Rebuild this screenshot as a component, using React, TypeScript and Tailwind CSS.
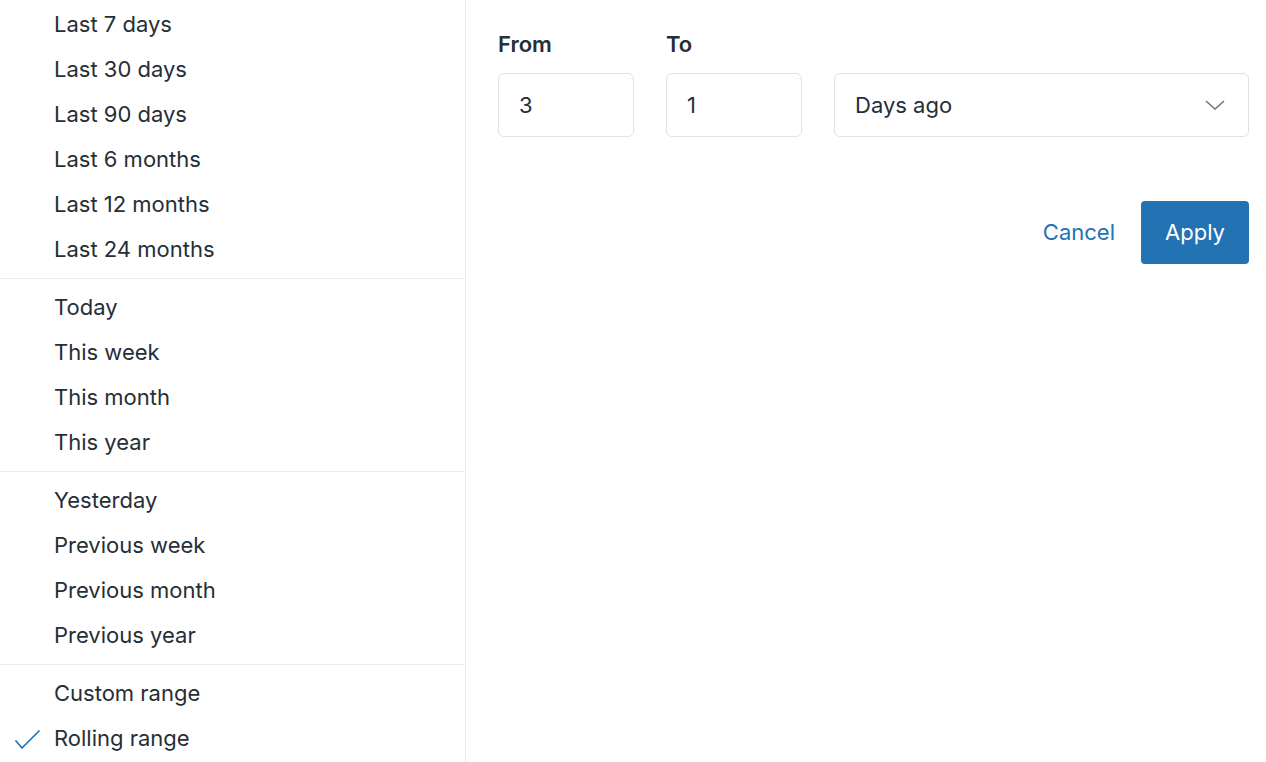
import React from "react";

const groups: string[][] = [
  ["Last 7 days", "Last 30 days", "Last 90 days", "Last 6 months", "Last 12 months", "Last 24 months"],
  ["Today", "This week", "This month", "This year"],
  ["Yesterday", "Previous week", "Previous month", "Previous year"],
  ["Custom range", "Rolling range"],
];

function Check() {
  return (
    <svg width="28" height="22" viewBox="0 0 28 22" className="absolute left-[13px] top-[11px]">
      <polyline points="3,14 9,21 26,4" fill="none" stroke="#2272b4" strokeWidth="1.7" strokeLinecap="round" strokeLinejoin="round" />
    </svg>
  );
}

export default function App() {
  return (
    <div
      className="flex h-[762px] w-full bg-white text-[#262e36] overflow-hidden"
      style={{ fontFamily: "Inter, 'Noto Sans', sans-serif" }}
    >
      <div className="w-[466px] shrink-0 border-r border-[#ececec] flex flex-col">
        {groups.map((g, gi) => (
          <div
            key={gi}
            className={
              gi === 0
                ? "pt-[2px] pb-[6px]"
                : "pt-[6px] pb-[6px] border-t border-[#ececec]"
            }
          >
            {g.map((item) => (
              <div key={item} className="relative h-[45px] flex items-center pl-[54px] text-[22px]">
                {item === "Rolling range" && <Check />}
                {item}
              </div>
            ))}
          </div>
        ))}
      </div>
      <div className="flex-1 pt-8 pl-8 pr-[17px]">
        <div className="flex gap-[32px]">
          <div className="flex flex-col w-[136px]">
            <div className="text-[22px] font-semibold leading-6 mb-[17px]">From</div>
            <div className="h-[64px] border border-[#dfe2e5] rounded-[6px] flex items-center pl-5 text-[22px]">3</div>
          </div>
          <div className="flex flex-col w-[136px]">
            <div className="text-[22px] font-semibold leading-6 mb-[17px]">To</div>
            <div className="h-[64px] border border-[#dfe2e5] rounded-[6px] flex items-center pl-5 text-[22px]">1</div>
          </div>
          <div className="flex flex-col flex-1">
            <div className="h-6 mb-[17px]" />
            <div className="h-[64px] border border-[#dfe2e5] rounded-[6px] flex items-center justify-between pl-5 pr-[23px] text-[22px]">
              <span>Days ago</span>
              <svg width="20" height="11" viewBox="0 0 20 11">
                <polyline points="1,1 10,9 19,1" fill="none" stroke="#6b7178" strokeWidth="1.5" />
              </svg>
            </div>
          </div>
        </div>
        <div className="flex justify-end items-center mt-[64px] gap-[26px]">
          <button className="text-[22px] text-[#2272b4]">Cancel</button>
          <button className="h-[63px] w-[108px] rounded-[4px] bg-[#2272b4] text-white text-[22px]">Apply</button>
        </div>
      </div>
    </div>
  );
}
